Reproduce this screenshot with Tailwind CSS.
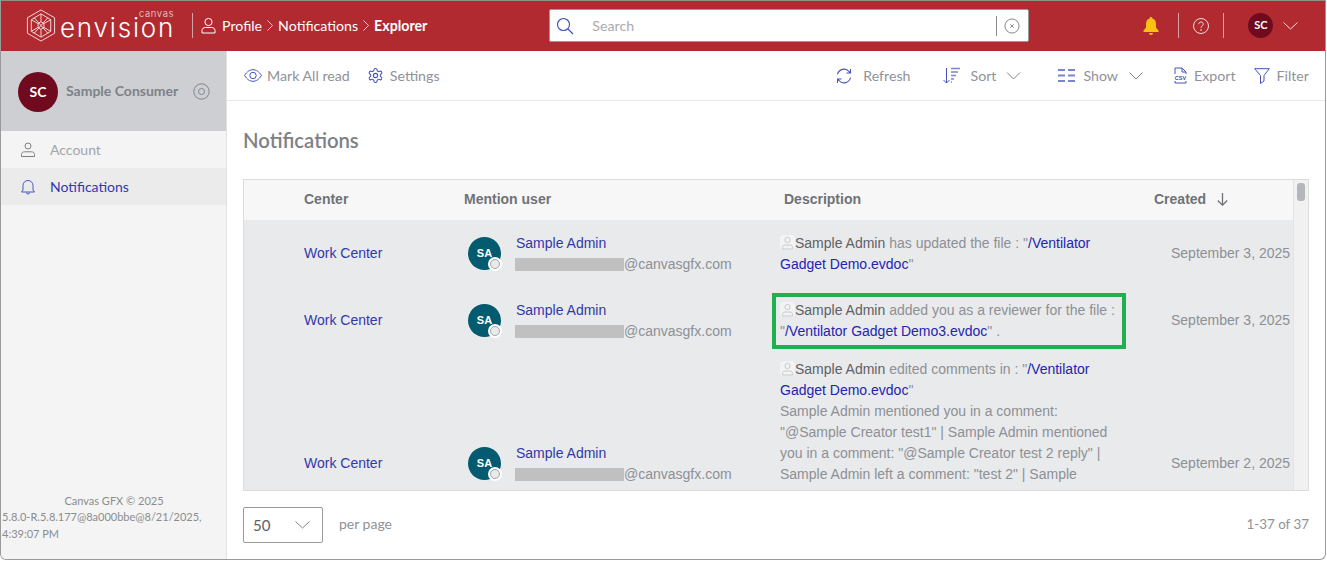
<!DOCTYPE html>
<html>
<head>
<meta charset="UTF-8">
<title>Notifications</title>
<script src="https://cdn.jsdelivr.net/npm/@tailwindcss/browser@4"></script>
</head>
<body class="bg-white">
<div class="w-[1326px] h-[560px] overflow-hidden border-l border-r border-b border-[#9a9a9a] rounded-b-md flex flex-col font-['Lato',sans-serif] text-[14px]">

  <!-- top bar -->
  <header class="h-[51px] shrink-0 bg-[#b02a30] border-t border-[#8f8f8f] flex items-center pb-[1px] text-white text-[14.200px]">
    <svg class="ml-[25px] w-[30px] h-[33px] shrink-0" viewBox="0 0 30 34" fill="none" stroke="#f3dcdc" stroke-width="1">
      <path d="M15 1 L29 9 V25 L15 33 L1 25 V9 Z"/>
      <path d="M15 5 L25 11 V23 L15 29 L5 23 V11 Z"/>
      <path d="M15 5 V13 M5 11 L12 15 M25 11 L18 15 M5 23 L12 19 M25 23 L18 19 M15 29 V21"/>
      <path d="M15 13 L18 15 V19 L15 21 L12 19 V15 Z"/>
      <path d="M8 9 L15 17 L22 9 M8 25 L15 17 L22 25"/>
    </svg>
    <div class="relative ml-[4px] w-[114px] h-[34px]">
      <span class="absolute right-0 top-[-2px] text-[9.500px] leading-[14px] tracking-[0.6px] font-['Inter',sans-serif] font-light text-[#f3dcdc]">canvas</span>
      <span class="absolute left-0 top-[4px] text-[26px] leading-[30px] font-light tracking-[1.800px] font-['Inter',sans-serif]">envision</span>
    </div>
    <div class="ml-[18px] w-px h-[25px] bg-[#d9a0a3]"></div>
    <svg class="ml-[8px] w-[15px] h-[17px]" viewBox="0 0 15 17" fill="none" stroke="white" stroke-width="1"><circle cx="7.500" cy="5" r="3.600"/><path d="M1 16 v-2.500 c0-2 1.600-3 3.500-3 h6 c1.900 0 3.500 1 3.500 3 V16 Z"/></svg>
    <span class="ml-[6px]">Profile</span>
    <svg class="mx-[5px] w-[6px] h-[11px]" viewBox="0 0 6 11" fill="none" stroke="#f0d0d0"><path d="M.5 .5 5.500 5.500 .5 10.500"/></svg>
    <span>Notifications</span>
    <svg class="mx-[5px] w-[6px] h-[11px]" viewBox="0 0 6 11" fill="none" stroke="#f0d0d0"><path d="M.5 .5 5.500 5.500 .5 10.500"/></svg>
    <span class="font-bold">Explorer</span>

    <div class="ml-[122px] w-[480px] h-[33px] bg-white border border-[#9a9a9a] rounded-[2px] flex items-center text-[#a9abb0]">
      <svg class="ml-[6px] w-[18px] h-[18px]" viewBox="0 0 18 18" fill="none" stroke="#3c4bb5" stroke-width="1.100"><circle cx="7.500" cy="7.500" r="6"/><path d="M12 12 17 17"/></svg>
      <span class="ml-[18px] flex-1">Search</span>
      <div class="w-px h-[20px] bg-[#8a8a8a]"></div>
      <svg class="ml-[7px] mr-[8px] w-[16px] h-[16px]" viewBox="0 0 17 17" fill="none" stroke="#808080"><circle cx="8.500" cy="8.500" r="7.500"/><path d="M6.700 6.700 10.300 10.300 M10.300 6.700 6.700 10.300"/></svg>
    </div>

    <svg class="ml-[114px] w-[16px] h-[18px]" viewBox="0 0 16 18" fill="#fdc013"><path d="M8 0a1.300 1.300 0 0 1 1.300 1.500C12 2.200 13 4.500 13 7v3.500l2.500 3V15H.5v-1.500L3 10.500V7c0-2.500 1-4.800 3.700-5.500A1.300 1.300 0 0 1 8 0Z"/><path d="M6 16h4a2 2 0 0 1-4 0Z"/></svg>
    <div class="ml-[19px] w-px h-[25px] bg-[#d9a0a3]"></div>
    <svg class="ml-[14px] w-[16px] h-[16px]" viewBox="0 0 16 16" fill="none" stroke="#f3dcdc"><circle cx="8" cy="8" r="7.500"/><path d="M5.700 6.200c0-1.400 1-2.200 2.300-2.200s2.300.9 2.300 2.100c0 1.800-2.300 1.800-2.300 3.700"/><circle cx="8" cy="12" r=".4"/></svg>
    <div class="ml-[14px] w-px h-[25px] bg-[#d9a0a3]"></div>
    <div class="ml-[24px] w-[25px] h-[25px] rounded-full bg-[#700a1e] flex items-center justify-center text-[11px] font-bold">SC</div>
    <svg class="ml-[10px] w-[15px] h-[8px]" viewBox="0 0 15 8" fill="none" stroke="#f3dcdc"><path d="M.5 .5 7.500 7 14.500 .5"/></svg>
  </header>

  <div class="flex-1 flex min-h-0">
    <!-- sidebar -->
    <aside class="w-[226px] shrink-0 bg-[#f4f4f4] border-r border-[#e2e2e2] flex flex-col">
      <div class="h-[80px] bg-[#cdcfd2] flex items-center pl-[17px] pt-[1px]">
        <div class="w-[40px] h-[40px] rounded-full bg-[#700a1e] text-white flex items-center justify-center text-[14px] font-bold">SC</div>
        <span class="ml-[8px] pb-[2px] font-bold text-[#7d8288] text-[14px]">Sample Consumer</span>
        <svg class="ml-[15px] w-[17px] h-[17px]" viewBox="0 0 17 17" fill="none" stroke="#808488"><circle cx="8.500" cy="8.500" r="7.700"/><circle cx="8.500" cy="8.500" r="3"/></svg>
      </div>
      <div class="h-[37px] flex items-center pl-[20px] text-[#a3a5a9]">
        <svg class="w-[14px] h-[15px]" viewBox="0 0 14 15" fill="none" stroke="#7f7f7f"><circle cx="7" cy="4" r="3"/><path d="M.5 14.500v-2c0-1.700 1.300-2.700 3-2.700h7c1.700 0 3 1 3 2.700v2Z"/></svg>
        <span class="ml-[15px]">Account</span>
      </div>
      <div class="h-[37px] flex items-center pl-[20px] bg-[#ebebeb] text-[#3238b0]">
        <svg class="w-[14px] h-[16px]" viewBox="0 0 14 16" fill="none" stroke="#4b55c0"><path d="M2 11V6.500a5 5 0 0 1 10 0V11l1.500 2H.5Z"/><path d="M5.500 13.500a1.500 1.500 0 0 0 3 0"/></svg>
        <span class="ml-[15px]">Notifications</span>
      </div>
      <div class="mt-auto mb-[17px] text-[11px] leading-[16.500px] text-[#8a8c90] pl-[1px]">
        <div class="text-center">Canvas GFX © 2025</div>
        <div>5.8.0-R.5.8.177@8a000bbe@8/21/2025,<br>4:39:07 PM</div>
      </div>
    </aside>

    <!-- main -->
    <main class="flex-1 min-w-0 flex flex-col">
      <div class="h-[50px] shrink-0 border-b border-[#e8e8e8] flex items-center pl-[17px] pr-[16px] text-[14.200px] text-[#8f9297]">
        <svg class="w-[18px] h-[13px]" viewBox="0 0 18 13" fill="none" stroke="#4652b8"><path d="M.600 6.500C3 2.500 6 .700 9 .700s6 1.800 8.400 5.800C15 10.500 12 12.300 9 12.300S3 10.500.600 6.500Z"/><circle cx="9" cy="6.500" r="3.200"/></svg>
        <span class="ml-[5px]">Mark All read</span>
        <svg class="ml-[17px] w-[17px] h-[17px]" viewBox="0 0 24 24" fill="none" stroke="#4652b8" stroke-width="1.500"><path d="M12.200 2h-.4a2 2 0 0 0-2 2v.2a2 2 0 0 1-1 1.700l-.4.300a2 2 0 0 1-2 0l-.200-.1a2 2 0 0 0-2.700.7l-.2.400a2 2 0 0 0 .7 2.700l.2.100a2 2 0 0 1 1 1.700v.5a2 2 0 0 1-1 1.700l-.2.100a2 2 0 0 0-.7 2.700l.2.400a2 2 0 0 0 2.700.7l.2-.1a2 2 0 0 1 2 0l.4.300a2 2 0 0 1 1 1.700v.2a2 2 0 0 0 2 2h.4a2 2 0 0 0 2-2v-.2a2 2 0 0 1 1-1.700l.4-.3a2 2 0 0 1 2 0l.2.100a2 2 0 0 0 2.700-.7l.2-.4a2 2 0 0 0-.7-2.700l-.2-.1a2 2 0 0 1-1-1.700v-.5a2 2 0 0 1 1-1.700l.2-.1a2 2 0 0 0 .7-2.700l-.2-.4a2 2 0 0 0-2.700-.7l-.2.100a2 2 0 0 1-2 0l-.4-.3a2 2 0 0 1-1-1.700V4a2 2 0 0 0-2-2Z"/><circle cx="12" cy="12" r="3"/></svg>
        <span class="ml-[6px]">Settings</span>

        <svg class="ml-auto w-[16px] h-[16px]" viewBox="0 0 16 16" fill="none" stroke="#4652b8" stroke-width="1.100"><path d="M1.500 6.500A6.600 6.600 0 0 1 13 3.500L14.500 5M14.500 1v4h-4M14.500 9.500A6.600 6.600 0 0 1 3 12.500L1.500 11M1.500 15v-4h4"/></svg>
        <span class="ml-[11px]">Refresh</span>
        <svg class="ml-[33px] w-[18px] h-[17px]" viewBox="0 0 18 17" fill="none" stroke="#4652b8"><path d="M3.500 1v15M.5 13l3 3 3-3"/><path d="M8 1.500h9M8 5h7M8 8.500h5M8 12h3M8 15h1" stroke="#7b84cf" stroke-width="1.400"/></svg>
        <span class="ml-[9px]">Sort</span>
        <svg class="ml-[10px] w-[15px] h-[8px]" viewBox="0 0 14 8" fill="none" stroke="#7f8388"><path d="M.5 .5 7 7 13.500 .5"/></svg>
        <svg class="ml-[37px] w-[17px] h-[15px]" viewBox="0 0 17 15" fill="none" stroke="#7b84cf" stroke-width="2"><path d="M0 2h7M10 2h7M0 7.500h7M10 7.500h7M0 13h7M10 13h7"/></svg>
        <span class="ml-[8px]">Show</span>
        <svg class="ml-[11px] w-[14px] h-[8px]" viewBox="0 0 14 8" fill="none" stroke="#7f8388"><path d="M.5 .5 7 7 13.500 .5"/></svg>
        <svg class="ml-[31px] w-[13px] h-[17px]" viewBox="0 0 13 17" fill="none" stroke="#4652b8"><path d="M1 7V1h7l4 4v2M8 1v4h4M1 14v2h11v-2"/><text x="6.500" y="12.500" text-anchor="middle" font-size="5.500" font-weight="700" fill="#3c4bb5" stroke="none" font-family="Liberation Sans">CSV</text></svg>
        <span class="ml-[7px]">Export</span>
        <svg class="ml-[18px] w-[16px] h-[16px]" viewBox="0 0 16 16" fill="none" stroke="#4652b8"><path d="M.7 .7h14.600L10 7.500v5.500l-3.500 2.500V7.500Z"/></svg>
        <span class="ml-[7px]">Filter</span>
      </div>

      <h1 class="mt-[26px] ml-[16px] h-[26px] text-[20.300px] leading-[26px] font-semibold text-[#7e8185]">Notifications</h1>

      <!-- table -->
      <div class="relative mt-[26px] ml-[16px] w-[1066px] h-[312px] border border-[#dcdcdc] flex overflow-hidden font-['Liberation_Sans',sans-serif] text-[14px] leading-[21px]">
        <div class="flex-1 min-w-0">
          <div class="h-[40px] bg-[#f7f7f7] flex items-center pb-[2px] font-bold text-[#6f7276]">
            <div class="w-[60px]"></div>
            <div class="w-[160px]">Center</div>
            <div class="w-[320px]">Mention user</div>
            <div class="w-[370px]">Description</div>
            <div class="flex items-center">Created
              <svg class="ml-[11px] w-[11px] h-[13px]" viewBox="0 0 11 13" fill="none" stroke="#6f7276" stroke-width="1.300"><path d="M5.500 0v12M.8 7.500l4.700 4.700 4.700-4.700"/></svg>
            </div>
          </div>

          <div class="bg-[#e9eaec] text-[#8d9095]">
            <!-- row 1 -->
            <div class="h-[66px] flex items-center">
              <div class="w-[60px]"></div>
              <div class="w-[160px] text-[#3238a8]">Work Center</div>
              <div class="w-[316px] flex items-center pl-[4px]">
                <div class="relative w-[33px] h-[33px] rounded-full bg-[#045a6e] text-white text-[11px] font-bold flex items-center justify-center">SA
                  <span class="absolute right-[-1px] bottom-[-1px] w-[14px] h-[14px] rounded-full bg-[#e9eaec] border-2 border-white outline outline-[#a8a8a8] outline-offset-[-3px]"></span>
                </div>
                <div class="ml-[14px] pt-[2px]">
                  <div class="pl-[1px] text-[#3238a8]">Sample Admin</div>
                  <div class="flex items-center"><span class="w-[109px] h-[13px] bg-[#c0c0c0]"></span>@canvasgfx.com</div>
                </div>
              </div>
              <div class="w-[340px] pt-[2px]">
                <svg class="inline-block w-[15px] h-[15px] align-[-2px]" viewBox="0 0 15 15"><rect width="15" height="15" rx="4" fill="#f2f3f4"/><g fill="none" stroke="#c4c4c4" stroke-width=".9"><circle cx="7.500" cy="5" r="2.600"/><path d="M2.500 14v-1.500c0-1.600 1-2.500 2.500-2.500h5c1.500 0 2.500.9 2.500 2.500V14Z"/></g></svg><span class="text-[#5e6165]">Sample Admin</span> has updated the file : "<span class="text-[#2424b0]">/Ventilator Gadget Demo.evdoc</span>"
              </div>
              <div class="ml-[51px] whitespace-nowrap">September 3, 2025</div>
            </div>
            <!-- row 2 -->
            <div class="h-[68px] flex items-center">
              <div class="w-[60px]"></div>
              <div class="w-[160px] text-[#3238a8]">Work Center</div>
              <div class="w-[316px] flex items-center pl-[4px]">
                <div class="relative w-[33px] h-[33px] rounded-full bg-[#045a6e] text-white text-[11px] font-bold flex items-center justify-center">SA
                  <span class="absolute right-[-1px] bottom-[-1px] w-[14px] h-[14px] rounded-full bg-[#e9eaec] border-2 border-white outline outline-[#a8a8a8] outline-offset-[-3px]"></span>
                </div>
                <div class="ml-[14px] pt-[2px]">
                  <div class="pl-[1px] text-[#3238a8]">Sample Admin</div>
                  <div class="flex items-center"><span class="w-[109px] h-[13px] bg-[#c0c0c0]"></span>@canvasgfx.com</div>
                </div>
              </div>
              <div class="relative w-[340px] pt-[2px]">
                <svg class="inline-block w-[15px] h-[15px] align-[-2px]" viewBox="0 0 15 15"><rect width="15" height="15" rx="4" fill="#f2f3f4"/><g fill="none" stroke="#c4c4c4" stroke-width=".9"><circle cx="7.500" cy="5" r="2.600"/><path d="M2.500 14v-1.500c0-1.600 1-2.500 2.500-2.500h5c1.500 0 2.500.9 2.500 2.500V14Z"/></g></svg><span class="text-[#5e6165]">Sample Admin</span> added you as a reviewer for the file : "<span class="text-[#2424b0]">/Ventilator Gadget Demo3.evdoc</span>" .
                <span class="absolute left-[-8px] top-[-5px] w-[354px] h-[56px] border-[4px] border-[#20b04f]"></span>
              </div>
              <div class="ml-[51px] whitespace-nowrap">September 3, 2025</div>
            </div>
            <!-- row 3 -->
            <div class="h-[218px] flex items-center">
              <div class="w-[60px]"></div>
              <div class="w-[160px] text-[#3238a8]">Work Center</div>
              <div class="w-[316px] flex items-center pl-[4px]">
                <div class="relative w-[33px] h-[33px] rounded-full bg-[#045a6e] text-white text-[11px] font-bold flex items-center justify-center">SA
                  <span class="absolute right-[-1px] bottom-[-1px] w-[14px] h-[14px] rounded-full bg-[#e9eaec] border-2 border-white outline outline-[#a8a8a8] outline-offset-[-3px]"></span>
                </div>
                <div class="ml-[14px] pt-[2px]">
                  <div class="pl-[1px] text-[#3238a8]">Sample Admin</div>
                  <div class="flex items-center"><span class="w-[109px] h-[13px] bg-[#c0c0c0]"></span>@canvasgfx.com</div>
                </div>
              </div>
              <div class="w-[340px] self-start pt-[5px]">
                <svg class="inline-block w-[15px] h-[15px] align-[-2px]" viewBox="0 0 15 15"><rect width="15" height="15" rx="4" fill="#f2f3f4"/><g fill="none" stroke="#c4c4c4" stroke-width=".9"><circle cx="7.500" cy="5" r="2.600"/><path d="M2.500 14v-1.500c0-1.600 1-2.500 2.500-2.500h5c1.500 0 2.500.9 2.500 2.500V14Z"/></g></svg><span class="text-[#5e6165]">Sample Admin</span> edited comments in : "<span class="text-[#2424b0]">/Ventilator Gadget Demo.evdoc</span>"<br>
                Sample Admin mentioned you in a comment: "@Sample Creator test1" | Sample Admin mentioned you in a comment: "@Sample Creator test 2 reply" | Sample Admin left a comment: "test 2" | Sample
              </div>
              <div class="ml-[51px] whitespace-nowrap">September 2, 2025</div>
            </div>
          </div>
        </div>
        <!-- scrollbar -->
        <div class="w-[15px] shrink-0 bg-[#f1f1f1] border-l border-[#e4e4e4] pt-[3px] pl-[3px]">
          <div class="w-[8px] h-[18px] rounded-[3px] bg-[#b4b6ba]"></div>
        </div>
      </div>

      <!-- pagination -->
      <div class="mt-[16px] ml-[16px] w-[1066px] flex items-center text-[#8f9297]">
        <div class="w-[80px] h-[36px] border border-[#9a9a9a] rounded-[2px] flex items-center pl-[9px] pr-[12px] justify-between text-[#5e6165] text-[15px]">50
          <svg class="w-[15px] h-[8px]" viewBox="0 0 15 8" fill="none" stroke="#7f8388"><path d="M.5 .5 7.500 7 14.500 .5"/></svg>
        </div>
        <span class="ml-[16px] pb-[3px] text-[14px]">per page</span>
        <span class="ml-auto pb-[2px] text-[13.400px]">1-37 of 37</span>
      </div>
    </main>
  </div>
</div>
</body>
</html>
